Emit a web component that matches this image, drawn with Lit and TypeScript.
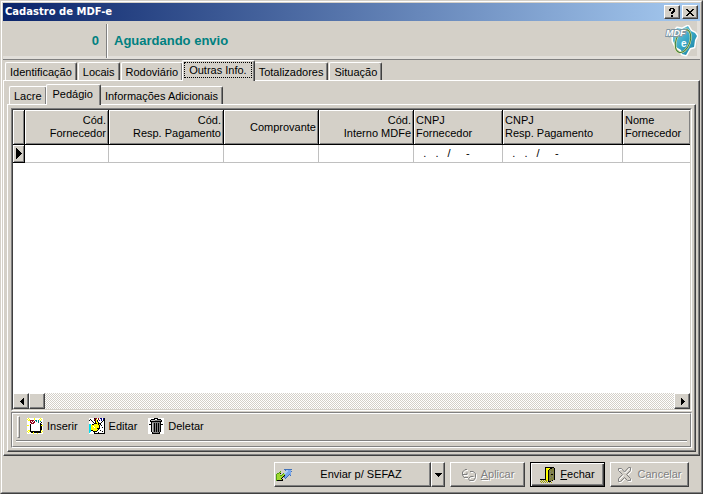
import { LitElement, html, svg, css } from "lit";
import { customElement, property } from "lit/decorators.js";
import { classMap } from "lit/directives/class-map.js";

const PALETTE: Record<string, string> = {
  w: "#ffffff",
  k: "#000000",
  y: "#ffff00",
  r: "#900018",
  t: "#008080",
  c: "#00e0f0",
  b: "#000080",
  g: "#808080",
  l: "#c0c0c0",
  m: "#808040",
  o: "#a0a000",
  n: "#4fa010",
  v: "#a0d830",
  s: "#7aa8ec",
  u: "#a8ccf8",
  e: "#4070b8",
};

const SPRITES: Record<string, string[]> = {
  insert: [
    "wywwwwwywwwwwyww",
    "ywywwwwywwwwywyw",
    "wyyrrrrwttwtwyww",
    "wwwrwrwrwtwtwtww",
    "wwwrrwrrwwwtwwkw",
    "wwwwrrrwwwwwwkww",
    "wwwkwwwwwwwwwkkw",
    "yywkwwwwwwwwwkyy",
    "wwwkwwwwwwwwwkkw",
    "wwwkwwwwwwwwwkkw",
    "wwwkwwwwwwwwwkkw",
    "wwwkwwwwwwwwwkkw",
    "wyykwwwwwwwwwkyw",
    "ywykkkkkkkkkkkwy",
    "wywwkkykkkkkkkyw",
    "wwwwwwywwwywwwww",
  ],
  edit: [
    "wwwwwkrrwrwbbwbk",
    "wkwwwrkywrwwbwbk",
    "kwkwwkrykwbwbwkk",
    "wwwkwwkykwwwwkwk",
    "wwwwkwkyykwwkwwk",
    "wwwwwkkkykkkwwwk",
    "ccwkkyyyykykwwwk",
    "ccyyyyyyyykwkwwk",
    "ccyywyyyyykwwwwk",
    "ccyyywyyyykwwkwk",
    "ccyyyyyykkkwwwwk",
    "ccyyyyyyykwwwwwk",
    "cckkyyyykwwkwwwk",
    "ccwwkkkkwwwwwkwk",
    "cwwwwkwwwkwwwwwk",
    "wwwwwkkkkkkkkkkk",
  ],
  trash: [
    "wwwwwwkkkkwwwwww",
    "wwwkkkkwwkkkkwww",
    "wwkllllggggggkww",
    "wwkkkkkkkkkkkkww",
    "wwwkggggggggkwww",
    "wwwklgkgkgkgkwww",
    "wkkklgkgkgkgkkkw",
    "wwwklgkgkgkgkwww",
    "wwwklgkgkgkgkwww",
    "wwwklgkgkgkgkwww",
    "wwwklgkgkgkgkwww",
    "wwwklgkgkgkgkwww",
    "wwwklgkgkgkgkwww",
    "wwwklgkgkgkgkwww",
    "wwwwkggggggkwwww",
    "wwwwkkkkkkkkwwww",
  ],
  send: [
    "................",
    "................",
    "........eeeeeeee",
    ".........euusss.",
    "....n.....uussse",
    "...nv....uussss.",
    ".nnvk..nuusssss.",
    "nvvv..nvvsssses.",
    "nvvvnnvvkssse.e.",
    "nvvvvvvkesse....",
    "nvvvvvk.ese.....",
    "nvvvvk...e......",
    "nvvvvvk.........",
    "nkkkkkk.........",
    "................",
    "................",
  ],
  door: [
    ".....kkkkkkkkk..",
    ".....kyyyykkmmk.",
    ".....kyyykmmmmk.",
    ".....kyykmmmmmk.",
    ".....kyykmgmmmk.",
    ".....kyykmmmgmk.",
    ".....kyykmgmmmk.",
    ".....kyykmmkkmk.",
    ".....kyykmmmmmk.",
    ".....kyykmmmgmk.",
    ".....kyykmgmmmk.",
    ".....kyykmmmmmk.",
    "kkkkkkyykmmmmmk.",
    ".o.o.ooykmmmk...",
    "o.o.o.o.kkk.....",
    ".o.o.o.o.o.o....",
  ],
};

const sprite = (name: string) => svg`
  <svg class="icon" width="16" height="16" viewBox="0 0 16 16" shape-rendering="crispEdges" aria-hidden="true">
    ${SPRITES[name].map((row, y) =>
      [...row].map((c, x) =>
        c === "." ? null : svg`<rect x=${x} y=${y} width="1" height="1" fill=${PALETTE[c]}></rect>`
      )
    )}
  </svg>`;

const arrow = (dir: "left" | "right" | "down") => {
  const d = {
    left: "M5 0h1v7h-1v-1h-1v-1h-1v-1h-1v-1h1v-1h1v-1h1z",
    right: "M2 0h1v1h1v1h1v1h1v1h-1v1h-1v1h-1v1h-1z",
    down: "M0 2h7v1h-1v1h-1v1h-1v1h-1v-1h-1v-1h-1v-1h-1z",
  }[dir];
  return html`<svg width="7" height="7" viewBox="0 0 7 7" shape-rendering="crispEdges" aria-hidden="true">
    <path d=${d}></path>
  </svg>`;
};

const raised = css`
  .raised {
    border: 1px solid;
    border-color: #fff #404040 #404040 #fff;
    box-shadow: inset -1px -1px #808080;
    background: #d4d0c8;
  }
`;

@customElement("tab-strip")
class TabStrip extends LitElement {
  @property({ type: Array }) tabs: string[] = [];
  @property({ type: Number }) selected = 0;
  @property({ type: Boolean }) focusRing = false;

  static styles = css`
    :host {
      display: flex;
      align-items: flex-end;
      height: 20px;
      padding-left: 2px;
    }
    .tab {
      box-sizing: border-box;
      height: 18px;
      margin: 0 1px 0 0;
      padding: 0 4px;
      border: 1px solid;
      border-color: #fff #404040 transparent #fff;
      border-bottom: 0;
      border-radius: 2px 2px 0 0;
      box-shadow: inset -1px 0 #808080;
      background: #d4d0c8;
      color: #000;
      font: 11px/16px "Liberation Sans", Arial, sans-serif;
      white-space: nowrap;
      outline: none;
    }
    .selected {
      position: relative;
      z-index: 1;
      height: 21px;
      margin: 0 -1px -1px -2px;
      padding: 0 2px 2px 1px;
    }
    .label {
      display: block;
      padding: 0 4px;
      border: 1px solid transparent;
      line-height: 14px;
    }
    .ring {
      border: 1px dotted #000;
    }
  `;

  render() {
    return this.tabs.map((t, i) => {
      const on = i === this.selected;
      return html`<button
        role="tab"
        aria-selected=${on}
        class=${classMap({ tab: true, selected: on })}
        @click=${() => (this.selected = i)}
      >${on ? html`<span class=${classMap({ label: true, ring: this.focusRing })}>${t}</span>` : t}</button>`;
    });
  }
}

interface Column {
  lines: string[];
  align: string;
  width: string;
  value: string;
}

const CNPJ_MASK = "   .   .   /     -";

const COLUMNS: Column[] = [
  { lines: ["Cód.", "Fornecedor"], align: "end", width: "w84", value: "" },
  { lines: ["Cód.", "Resp. Pagamento"], align: "end", width: "w115", value: "" },
  { lines: ["Comprovante"], align: "end", width: "w95", value: "" },
  { lines: ["Cód.", "Interno MDFe"], align: "end", width: "w95", value: "" },
  { lines: ["CNPJ", "Fornecedor"], align: "start", width: "w89", value: CNPJ_MASK },
  { lines: ["CNPJ", "Resp. Pagamento"], align: "start", width: "w120", value: CNPJ_MASK },
  { lines: ["Nome", "Fornecedor"], align: "start", width: "rest", value: "" },
];

@customElement("toll-grid")
class TollGrid extends LitElement {
  static styles = [
    raised,
    css`
      :host {
        display: flex;
        flex-direction: column;
        flex: 1;
        min-height: 120px;
        border: 1px solid;
        border-color: #808080 #fff #fff #808080;
      }
      .inner {
        flex: 1;
        display: flex;
        flex-direction: column;
        border: 1px solid;
        border-color: #404040 #d4d0c8 #d4d0c8 #404040;
        background: #fff;
      }
      .view {
        flex: 1;
        overflow: hidden;
      }
      table {
        width: 100%;
        table-layout: fixed;
        border-collapse: separate;
        border-spacing: 0;
        font: 11px/13px "Liberation Sans", Arial, sans-serif;
      }
      .mark { width: 12px; }
      .w84 { width: 84px; }
      .w89 { width: 89px; }
      .w95 { width: 95px; }
      .w115 { width: 115px; }
      .w120 { width: 120px; }
      th,
      td {
        box-sizing: border-box;
        overflow: hidden;
      }
      th {
        height: 35px;
        padding: 0 2px;
        border-right: 1px solid #000;
        border-bottom: 1px solid #000;
        background: #d4d0c8;
        box-shadow: inset 1px 1px #fff, inset -1px -1px #808080;
        font-weight: normal;
        white-space: pre;
      }
      th:last-child,
      td:last-child {
        border-right: 0;
      }
      .start { text-align: left; }
      .end { text-align: right; }
      td {
        height: 18px;
        padding: 0;
        border-right: 1px solid #c0c0c0;
        border-bottom: 1px solid #c0c0c0;
      }
      .value { white-space: pre; }
      .current {
        border-color: #000;
        background: #d4d0c8;
        box-shadow: inset 1px 1px #fff, inset -1px -1px #808080;
      }
      .current svg {
        display: block;
        margin-left: 3px;
      }
      .scroll {
        display: flex;
        height: 16px;
        background: repeating-conic-gradient(#fff 0 25%, #d4d0c8 0 50%) 0 0 / 2px 2px;
      }
      .track { flex: 1; }
      .knob {
        box-sizing: border-box;
        width: 16px;
        height: 16px;
        padding: 0;
        display: flex;
        align-items: center;
        justify-content: center;
      }
    `,
  ];

  render() {
    return html`
      <div class="inner">
        <div class="view">
          <table>
            <thead>
              <tr>
                <th class="mark"></th>
                ${COLUMNS.map((c) => html`<th scope="col" class="${c.align} ${c.width}">${c.lines.join("\n")}</th>`)}
              </tr>
            </thead>
            <tbody>
              <tr>
                <td class="current">
                  <svg width="6" height="11" viewBox="0 0 6 11" shape-rendering="crispEdges" aria-hidden="true">
                    <path d="M0 0h1v1h1v1h1v1h1v1h1v1h1v1h-1v1h-1v1h-1v1h-1v1h-1v1h-1z"></path>
                  </svg>
                </td>
                ${COLUMNS.map((c) => html`<td class="value">${c.value}</td>`)}
              </tr>
            </tbody>
          </table>
        </div>
        <div class="scroll">
          <button class="knob raised" aria-label="Rolar à esquerda">${arrow("left")}</button>
          <div class="knob raised"></div>
          <div class="track"></div>
          <button class="knob raised" aria-label="Rolar à direita">${arrow("right")}</button>
        </div>
      </div>
    `;
  }
}

@customElement("app-root")
class AppRoot extends LitElement {
  static styles = [
    raised,
    css`
      :host {
        display: flex;
        box-sizing: border-box;
        min-height: 100vh;
        border: 1px solid;
        border-color: #d4d0c8 #404040 #404040 #d4d0c8;
        background: #d4d0c8;
        color: #000;
        font: 11px/13px "Liberation Sans", Arial, sans-serif;
      }
      .window {
        flex: 1;
        min-width: 0;
        display: flex;
        flex-direction: column;
        border: 1px solid;
        border-color: #fff #808080 #808080 #fff;
        padding: 1px;
      }
      button {
        color: #000;
        font: inherit;
      }
      .title {
        display: flex;
        align-items: center;
        gap: 2px;
        height: 18px;
        padding: 0 2px;
        background: linear-gradient(90deg, #0a246a, #a6caf0);
      }
      .title h1 {
        flex: 1;
        margin: 0;
        color: #fff;
        font: bold 10px/18px "DejaVu Sans", sans-serif;
      }
      .caption {
        display: flex;
        align-items: center;
        justify-content: center;
        box-sizing: border-box;
        width: 16px;
        height: 14px;
        padding: 0;
      }
      .status {
        display: flex;
        align-items: center;
        box-sizing: border-box;
        height: 39px;
        padding: 2px 2px 0 0;
        border-bottom: 1px solid #808080;
        box-shadow: inset 0 -3px #e2dfda, inset -3px 0 #e2dfda;
        color: #008080;
        font: bold 13px/16px "Liberation Sans", Arial, sans-serif;
      }
      .number {
        box-sizing: border-box;
        width: 103px;
        padding-right: 7px;
        text-align: right;
      }
      .state {
        flex: 1;
        height: 34px;
        padding-left: 7px;
        border-left: 1px solid #808080;
        box-shadow: inset 1px 0 #fff;
        line-height: 34px;
      }
      .logo { flex: none; }
      .page,
      .sheet {
        flex: 1;
        display: flex;
        flex-direction: column;
        padding: 3px;
      }
      .tools {
        flex: none;
        margin-top: 1px;
        border: 1px solid;
        border-color: #808080 #fff #fff #808080;
      }
      .toolsin {
        padding: 2px 3px 5px;
        border: 1px solid;
        border-color: #fff #808080 #808080 #fff;
      }
      .bar {
        display: flex;
        align-items: center;
        gap: 11px;
        height: 20px;
        padding: 0 0 4px 1px;
        border-bottom: 1px solid #808080;
        box-shadow: 0 1px #fff;
      }
      .grip {
        box-sizing: border-box;
        align-self: flex-start;
        width: 3px;
        height: 22px;
        margin-right: -4px;
        border: 1px solid;
        border-color: #fff #808080 #808080 #fff;
      }
      .tool {
        display: flex;
        align-items: center;
        gap: 4px;
        padding: 0;
        border: 0;
        background: none;
      }
      .icon {
        display: block;
        flex: none;
      }
      .footer {
        display: flex;
        justify-content: flex-end;
        gap: 5px;
        padding: 6px 11px 4px;
      }
      .cmd {
        display: flex;
        align-items: center;
        justify-content: center;
        gap: 4px;
        box-sizing: border-box;
        width: 75px;
        height: 25px;
        padding: 0;
      }
      .wide { width: 79px; }
      .split { display: flex; }
      .send {
        width: 157px;
        padding: 0 4px 0 1px;
      }
      .send span { flex: 1; }
      .drop { width: 14px; }
      .cmd:disabled {
        color: #808080;
        text-shadow: 1px 1px #fff;
      }
      .default {
        border-color: #000;
        box-shadow: inset 1px 1px #fff, inset -1px -1px #404040, inset -2px -2px #808080;
      }
    `,
  ];

  render() {
    return html`
      <main class="window">
        <header class="title">
          <h1>Cadastro de MDF-e</h1>
          <button class="caption raised" aria-label="Ajuda">
            <svg width="8" height="9" viewBox="0 0 8 9" shape-rendering="crispEdges">
              <path d="M2 0h4v1h1v3h-1v1h-1v1h-2v-2h1v-1h1v-2h-2v2h-2v-2h1zM3 7h2v2h-2z"></path>
            </svg>
          </button>
          <button class="caption raised" aria-label="Fechar janela">
            <svg width="8" height="7" viewBox="0 0 8 7" shape-rendering="crispEdges">
              <path d="M0 0h2v1h1v1h2v-1h1v-1h2v1h-1v1h-1v1h-1v1h1v1h1v1h1v1h-2v-1h-1v-1h-2v1h-1v1h-2v-1h1v-1h1v-1h1v-1h-1v-1h-1v-1h-1z"></path>
            </svg>
          </button>
        </header>

        <section class="status">
          <div class="number">0</div>
          <div class="state">Aguardando envio</div>
          <svg class="logo" width="33" height="32" viewBox="0 0 33 32" role="img" aria-label="MDF-e">
            <defs>
              <linearGradient id="sea" x1="0" y1="0" x2="1" y2="1">
                <stop offset="0" stop-color="#88d0e0"></stop>
                <stop offset=".5" stop-color="#38a8c8"></stop>
                <stop offset="1" stop-color="#187c9c"></stop>
              </linearGradient>
            </defs>
            <path
              d="M8 9l4-6 5 1 6-3 3 5 4 2 2 3-2 4-1 7-4 1-4 7-4-1-1-4-5-3-3-6z"
              fill="url(#sea)" stroke="#fff" stroke-width="3" stroke-linejoin="round" paint-order="stroke"
            ></path>
            <ellipse cx="18" cy="16" rx="7" ry="12" transform="rotate(20 18 16)" fill="none" stroke="#e8e8a0" stroke-width="2"></ellipse>
            <ellipse cx="18" cy="16" rx="7" ry="12" transform="rotate(20 18 16)" fill="none" stroke="#3c7c40" stroke-width="1"></ellipse>
            <text x="1" y="11" font-family="Liberation Sans" font-size="9" font-weight="bold" font-style="italic" fill="#fff" stroke="#8098a4" stroke-width="2" paint-order="stroke">MDF</text>
            <text x="16" y="22" font-family="Liberation Sans" font-size="10" font-weight="bold" fill="#f4ffff">e</text>
          </svg>
        </section>

        <tab-strip
          role="tablist"
          focusRing
          .tabs=${["Identificação", "Locais", "Rodoviário", "Outras Info.", "Totalizadores", "Situação"]}
          .selected=${3}
        ></tab-strip>
        <section class="page raised">
          <tab-strip role="tablist" .tabs=${["Lacre", "Pedágio", "Informações Adicionais"]} .selected=${1}></tab-strip>
          <div class="sheet raised">
            <toll-grid></toll-grid>
            <div class="tools">
              <div class="toolsin">
                <div class="bar" role="toolbar">
                  <div class="grip"></div>
                  <button class="tool">${sprite("insert")}Inserir</button>
                  <button class="tool">${sprite("edit")}Editar</button>
                  <button class="tool">${sprite("trash")}Deletar</button>
                </div>
              </div>
            </div>
          </div>
        </section>

        <footer class="footer">
          <div class="split">
            <button class="cmd raised send">${sprite("send")}<span>Enviar p/ SEFAZ</span></button>
            <button class="cmd raised drop" aria-label="Mais opções">${arrow("down")}</button>
          </div>
          <button class="cmd raised" disabled>
            <svg class="icon" width="16" height="16" viewBox="0 0 16 16" fill="none" aria-hidden="true">
              <path stroke="#fff" d="M7 3.500H5L2.500 6v2.500L4 11.500h4M3 8.500h4v-2M10 5.500h3l2.500 2v4l-2 3h-4l-1-2 2-2h3"></path>
              <path stroke="#808080" d="M6 2.500H4L1.500 5v3L3 10.500h4M2 7.500h4v-2M9 4.500h3l2.500 2v4l-2 3h-4l-1-2 2-2h3"></path>
            </svg>
            <span><u>A</u>plicar</span>
          </button>
          <button class="cmd raised default">${sprite("door")}<span><u>F</u>echar</span></button>
          <button class="cmd raised wide" disabled>
            <svg class="icon" width="16" height="16" viewBox="0 0 16 16" fill="none" aria-hidden="true">
              <path stroke="#fff" d="M2.500 2.500h3l3 3.500 4-4.500h2v3L10.500 8.500l4 4v2h-3l-3-3-4 4h-2v-3l4-4-4-4z"></path>
              <path stroke="#808080" d="M1.500 1.500h3l3 3.500 4-4.500h2v3L9.500 7.500l4 4v2h-3l-3-3-4 4h-2v-3l4-4-4-4z"></path>
            </svg>
            <span>Cancelar</span>
          </button>
        </footer>
      </main>
    `;
  }
}
